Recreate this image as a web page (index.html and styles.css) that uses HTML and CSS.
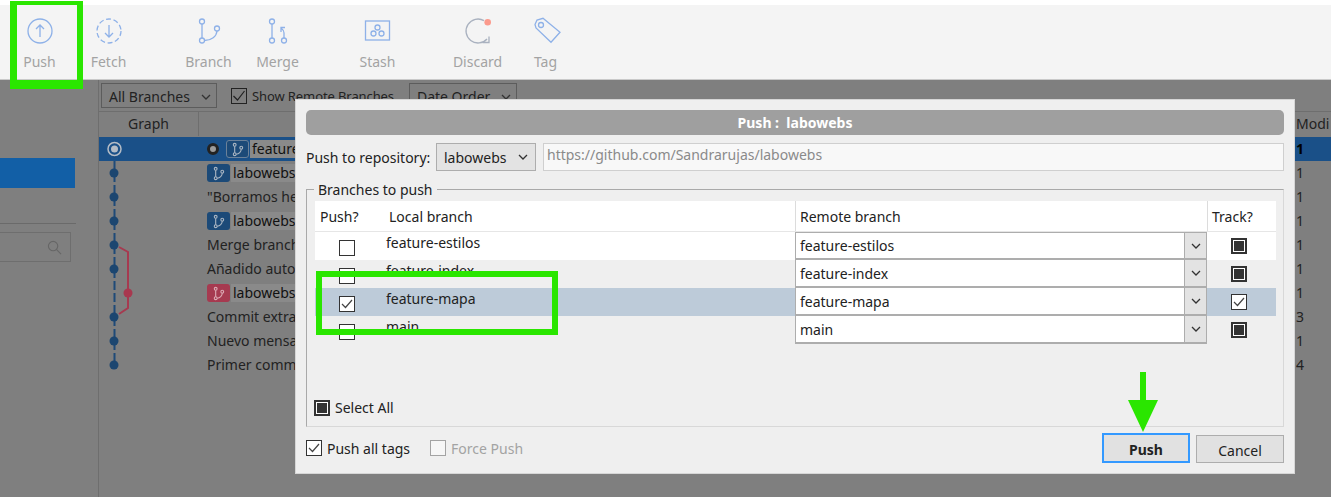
FILE: index.html
```html
<!DOCTYPE html>
<html lang="es">
<head>
  <meta charset="UTF-8">
  <title>Push : labowebs</title>
  <link rel="stylesheet" href="styles.css">
</head>
<body>
  <header class="toolbar">
    <div class="tool">
      <svg class="icon" viewBox="0 0 30 30"><circle cx="15" cy="15" r="12"/><path d="M15 21V9M11 13l4-4 4 4"/></svg>
      <span>Push</span>
    </div>
    <div class="tool">
      <svg class="icon" viewBox="0 0 30 30"><circle cx="15" cy="15" r="12" stroke-dasharray="5 2.6"/><path d="M15 9v12M11 17l4 4 4-4"/></svg>
      <span>Fetch</span>
    </div>
    <div class="tool tool-first">
      <svg class="icon" viewBox="0 0 30 30"><circle cx="8" cy="5.5" r="2.5"/><circle cx="8" cy="24.5" r="2.5"/><circle cx="23" cy="12.5" r="2.5"/><path d="M8 8v14M10.5 24.5c7 0 12-4 12.500-9.500"/></svg>
      <span>Branch</span>
    </div>
    <div class="tool">
      <svg class="icon" viewBox="0 0 30 30"><circle cx="9" cy="5.500" r="2.500"/><circle cx="9" cy="24.500" r="2.500"/><circle cx="21" cy="24.500" r="2.500"/><path d="M9 8v14M21 22v-5c0-2-1-3.500-3-5M18 16v-4.500h4"/></svg>
      <span>Merge</span>
    </div>
    <div class="tool tool-first">
      <svg class="icon" viewBox="0 0 30 30"><rect x="2.500" y="5" width="24" height="19"/><circle cx="14.500" cy="11.500" r="2.500"/><circle cx="10.500" cy="17.500" r="2.500"/><circle cx="18.500" cy="17.500" r="2.500"/></svg>
      <span>Stash</span>
    </div>
    <div class="tool tool-first">
      <svg class="icon" viewBox="0 0 30 30"><path class="gray" d="M21 4.600A12 12 0 1 0 24 23"/><path class="gray" d="M26 20.500v6h-6.500"/><circle class="red" cx="24.700" cy="6.300" r="3.300"/></svg>
      <span>Discard</span>
    </div>
    <div class="tool tool-tag">
      <svg class="icon" viewBox="0 0 30 30"><path d="M4 8.500l2-4.500 6-1.700L29 16.300 20 26.300 5 12z"/><circle cx="10" cy="9" r="2.500"/></svg>
      <span>Tag</span>
    </div>
  </header>

  <div class="workspace">
    <aside class="sidebar">
      <div class="side-item"></div>
      <div class="side-rule"></div>
      <div class="side-search">
        <svg class="search-icon" viewBox="0 0 16 16"><circle cx="6.500" cy="6.500" r="5"/><path d="M10 10l5 5"/></svg>
      </div>
    </aside>

    <main class="history">
      <div class="filters">
        <div class="drop drop-branches">All Branches <svg class="chev" viewBox="0 0 10 6"><path d="M1 1l4 4 4-4"/></svg></div>
        <label class="show-remote"><span class="box-dim"><svg viewBox="0 0 16 16"><path d="M2.500 8l4 4 7-9"/></svg></span>Show Remote Branches</label>
        <div class="drop drop-order">Date Order <svg class="chev" viewBox="0 0 10 6"><path d="M1 1l4 4 4-4"/></svg></div>
      </div>
      <div class="columns">
        <div class="col-graph">Graph</div>
        <div class="col-desc"></div>
        <div class="col-mod">Modi</div>
      </div>
      <div class="commits">
        <svg class="graph" viewBox="0 0 99 240" width="99" height="240">
          <path class="line-blue" d="M15.500 12V228" stroke-dasharray="9 3"/>
          <path class="line-red" d="M20 110l9 5V171l-9 6"/>
          <circle class="ring" cx="15.500" cy="12" r="6.500"/>
          <circle class="ring-core" cx="15.500" cy="12" r="3.500"/>
          <circle class="dot" cx="15" cy="36" r="4.500"/>
          <circle class="dot" cx="15" cy="60" r="4.500"/>
          <circle class="dot" cx="15" cy="84" r="4.500"/>
          <circle class="dot" cx="15" cy="108" r="4.500"/>
          <circle class="dot" cx="15" cy="132" r="4.500"/>
          <circle class="dot-red" cx="29" cy="156" r="4.500"/>
          <circle class="dot" cx="15" cy="180" r="4.500"/>
          <circle class="dot" cx="15" cy="204" r="4.500"/>
          <circle class="dot" cx="15" cy="228" r="4.500"/>
        </svg>
        <div class="commit commit-selected">
          <div class="commit-text"><span class="head-dot"></span><span class="badge badge-head"><svg viewBox="0 0 16 16"><use href="#branch-glyph"/></svg></span><span class="ref">feature</span></div>
          <div class="commit-num">1</div>
        </div>
        <div class="commit">
          <div class="commit-text"><span class="badge"><svg viewBox="0 0 16 16"><use href="#branch-glyph"/></svg></span><span class="ref">labowebs/</span></div>
          <div class="commit-num">1</div>
        </div>
        <div class="commit">
          <div class="commit-text">"Borramos he</div>
          <div class="commit-num">1</div>
        </div>
        <div class="commit">
          <div class="commit-text"><span class="badge"><svg viewBox="0 0 16 16"><use href="#branch-glyph"/></svg></span><span class="ref">labowebs/</span></div>
          <div class="commit-num">1</div>
        </div>
        <div class="commit">
          <div class="commit-text">Merge branch</div>
          <div class="commit-num">1</div>
        </div>
        <div class="commit">
          <div class="commit-text">Añadido auto</div>
          <div class="commit-num">1</div>
        </div>
        <div class="commit">
          <div class="commit-text"><span class="badge badge-red"><svg viewBox="0 0 16 16"><use href="#branch-glyph"/></svg></span><span class="ref">labowebs/</span></div>
          <div class="commit-num">1</div>
        </div>
        <div class="commit">
          <div class="commit-text">Commit extra</div>
          <div class="commit-num">3</div>
        </div>
        <div class="commit">
          <div class="commit-text">Nuevo mensa</div>
          <div class="commit-num">1</div>
        </div>
        <div class="commit">
          <div class="commit-text">Primer comm</div>
          <div class="commit-num">4</div>
        </div>
      </div>
    </main>
  </div>

  <svg class="defs" width="0" height="0">
    <symbol id="branch-glyph" viewBox="0 0 16 16">
      <g fill="none" stroke="currentColor" stroke-width="1.200">
        <circle cx="5" cy="3" r="1.500"/><circle cx="5" cy="13" r="1.500"/><circle cx="12" cy="6" r="1.500"/>
        <path d="M5 4.500v7M6.500 13c3 0 5.500-2.500 5.500-5.500"/>
      </g>
    </symbol>
  </svg>

  <section class="dialog">
    <h2 class="dialog-title">Push :&nbsp; labowebs</h2>
    <div class="repo-row">
      <span class="repo-label">Push to repository:</span>
      <div class="combo-repo">labowebs <svg class="chev" viewBox="0 0 10 6"><path d="M1 1l4 4 4-4"/></svg></div>
      <div class="repo-url">https://github.com/Sandrarujas/labowebs</div>
    </div>

    <div class="group">
      <span class="group-legend">Branches to push</span>
      <div class="branch-table">
        <div class="branch-row branch-head">
          <div class="cell-local"><span class="head-push">Push?</span><span>Local branch</span></div>
          <div class="cell-remote-head">Remote branch</div>
          <div class="cell-track-head">Track?</div>
        </div>
        <div class="branch-row row-white">
          <div class="cell-local"><span class="check"></span><span class="local-name">feature-estilos</span></div>
          <div class="remote"><span class="remote-value">feature-estilos</span><span class="remote-btn"><svg class="chev" viewBox="0 0 10 6"><path d="M1 1l4 4 4-4"/></svg></span></div>
          <div class="cell-track"><span class="check check-mixed"></span></div>
        </div>
        <div class="branch-row">
          <div class="cell-local"><span class="check"></span><span class="local-name">feature-index</span></div>
          <div class="remote"><span class="remote-value">feature-index</span><span class="remote-btn"><svg class="chev" viewBox="0 0 10 6"><path d="M1 1l4 4 4-4"/></svg></span></div>
          <div class="cell-track"><span class="check check-mixed"></span></div>
        </div>
        <div class="branch-row row-selected">
          <div class="cell-local"><span class="check"><svg viewBox="0 0 14 14"><path d="M2 7l3.500 3.500L12 3"/></svg></span><span class="local-name">feature-mapa</span></div>
          <div class="remote"><span class="remote-value">feature-mapa</span><span class="remote-btn"><svg class="chev" viewBox="0 0 10 6"><path d="M1 1l4 4 4-4"/></svg></span></div>
          <div class="cell-track"><span class="check"><svg viewBox="0 0 14 14"><path d="M2 7l3.500 3.500L12 3"/></svg></span></div>
        </div>
        <div class="branch-row">
          <div class="cell-local"><span class="check"></span><span class="local-name">main</span></div>
          <div class="remote"><span class="remote-value">main</span><span class="remote-btn"><svg class="chev" viewBox="0 0 10 6"><path d="M1 1l4 4 4-4"/></svg></span></div>
          <div class="cell-track"><span class="check check-mixed"></span></div>
        </div>
      </div>
      <label class="select-all"><span class="check check-mixed"></span>Select All</label>
    </div>

    <div class="dialog-foot">
      <label class="opt"><span class="check"><svg viewBox="0 0 14 14"><path d="M2 7l3.500 3.500L12 3"/></svg></span>Push all tags</label>
      <label class="opt opt-off"><span class="check"></span>Force Push</label>
      <button class="btn btn-default">Push</button>
      <button class="btn btn-cancel">Cancel</button>
    </div>
  </section>

  <div class="mark mark-push"></div>
  <div class="mark mark-branch"></div>
  <svg class="mark-arrow" viewBox="0 0 32 60" width="32" height="60"><path d="M13 0h6v28h12L16 60 1 28h12z"/></svg>
</body>
</html>
```

FILE: styles.css
```css
* {
  box-sizing: border-box;
}
html, body {
  margin: 0;
  height: 497px;
  overflow: hidden;
}
body {
  position: relative;
  font-family: "Noto Sans", "Open Sans", sans-serif;
  font-size: 14px;
  color: #222;
  background: #7f7f7f;
}

/* toolbar */
.toolbar {
  display: flex;
  height: 80px;
  padding-left: 5px;
  background: #f4f4f4;
  border-top: 5px solid #fff;
  border-bottom: 1px solid #c9c9c9;
}
.tool {
  display: flex;
  flex-direction: column;
  align-items: center;
  width: 69px;
  padding-top: 11px;
  color: #a3a3a3;
}
.tool span {
  margin-top: 6px;
}
.tool-first {
  margin-left: 31px;
}
.tool-tag {
  margin-left: -1px;
}
.icon {
  width: 30px;
  height: 30px;
  fill: none;
  stroke: #8eb1e8;
  stroke-width: 1.300;
}
.icon .gray {
  stroke: #a9b1bf;
}
.icon .red {
  fill: #fb9a8c;
  stroke: none;
}

/* window behind the dialog */
.workspace {
  display: flex;
  height: 417px;
}
.sidebar {
  width: 99px;
  padding: 78px 23px 0 0;
  border-right: 1px solid #6e6e6e;
}
.side-item {
  width: 75px;
  height: 30px;
  background: #125fa6;
}
.side-rule {
  width: 76px;
  height: 1px;
  margin-top: 35px;
  background: #6a6a6a;
}
.side-search {
  display: flex;
  align-items: center;
  justify-content: flex-end;
  width: 71px;
  height: 30px;
  margin-top: 8px;
  padding-right: 8px;
  border: 1px solid #6e6e6e;
  border-left: 0;
}
.search-icon {
  width: 15px;
  height: 15px;
  fill: none;
  stroke: #666;
  stroke-width: 1.200;
}
.history {
  flex: 1;
  min-width: 0;
}
.filters {
  display: flex;
  align-items: center;
  height: 31px;
  padding-left: 2px;
  color: #222;
}
.drop {
  display: flex;
  align-items: center;
  justify-content: space-between;
  height: 25px;
  padding: 2px 5px 0 7px;
  border: 1px solid #5c5c5c;
}
.drop-branches {
  width: 116px;
}
.drop-order {
  width: 108px;
  margin-left: 15px;
}
.chev {
  width: 10px;
  height: 6px;
  flex: none;
  fill: none;
  stroke: #333;
  stroke-width: 1.300;
}
.show-remote {
  display: flex;
  align-items: center;
  gap: 5px;
  margin-left: 14px;
  font-size: 13px;
  letter-spacing: -0.1px;
}
.box-dim {
  width: 16px;
  height: 16px;
  border: 1px solid #222;
}
.box-dim svg {
  display: block;
  fill: none;
  stroke: #222;
  stroke-width: 1.200;
  margin: -1px;
}
.columns {
  display: grid;
  grid-template-columns: 100px 1fr 35px;
  height: 25px;
  line-height: 24px;
  border-top: 1px solid #6e6e6e;
}
.col-graph {
  text-align: center;
  border-right: 1px solid #6e6e6e;
}
.commits {
  position: relative;
  padding-top: 1px;
}
.graph {
  position: absolute;
  left: 0;
  top: 1px;
  fill: none;
}
.line-blue {
  stroke: #1f4a78;
  stroke-width: 2;
}
.line-red {
  stroke: #a63a50;
  stroke-width: 2;
}
.ring {
  fill: #1a5088;
  stroke: #b4bcc6;
  stroke-width: 1.500;
}
.ring-core {
  fill: #b4bcc6;
}
.dot {
  fill: #1c4670;
}
.dot-red {
  fill: #a8384f;
}
.commit {
  display: grid;
  grid-template-columns: 1fr 35px;
  height: 24px;
  line-height: 24px;
  padding-left: 108px;
}
.commit-selected {
  background: #1a5088;
}
.commit-text {
  display: flex;
  align-items: center;
  white-space: nowrap;
}
.commit-num {
  overflow: hidden;
}
.commit-selected .commit-num {
  color: #000;
  font-weight: 700;
}
.head-dot {
  width: 12px;
  height: 12px;
  margin-right: 7px;
  border: 3px solid #222;
  border-radius: 50%;
  background: #9c9c9c;
}
.badge {
  display: flex;
  align-items: center;
  justify-content: center;
  width: 23px;
  height: 18px;
  border-radius: 3px;
  background: #1c4a78;
  color: #a9b5c2;
}
.badge svg {
  width: 15px;
  height: 15px;
}
.badge-head {
  border: 1px solid #6b8199;
}
.badge-red {
  background: #a63a50;
  color: #dcaab4;
}
.ref {
  height: 18px;
  line-height: 18px;
  margin-left: 1px;
  padding-left: 2px;
  background: #8a8a8a;
  color: #111;
}
.defs {
  position: absolute;
}

/* push dialog */
.dialog {
  position: absolute;
  left: 295px;
  top: 99px;
  display: flex;
  flex-direction: column;
  width: 1000px;
  height: 375px;
  padding: 10px 10px 0;
  background: #efefef;
  border: 1px solid #d6d6d6;
}
.dialog-title {
  height: 25px;
  margin: 0;
  border-radius: 5px;
  background: #9f9f9f;
  color: #fff;
  font-size: 14px;
  font-weight: 700;
  line-height: 25px;
  text-align: center;
}
.repo-row {
  display: flex;
  align-items: center;
  height: 28px;
  margin-top: 8px;
}
.repo-label {
  width: 130px;
}
.combo-repo {
  display: flex;
  align-items: center;
  justify-content: space-between;
  width: 100px;
  height: 28px;
  padding: 0 7px;
  background: #e3e3e3;
  border: 1px solid #adadad;
}
.repo-url {
  flex: 1;
  height: 28px;
  margin-left: 7px;
  padding-left: 3px;
  line-height: 22px;
  color: #8a8a8a;
  background: #f8f8f8;
  border: 1px solid #cfcfcf;
}
.group {
  position: relative;
  display: flex;
  flex-direction: column;
  height: 238px;
  margin-top: 18px;
  padding: 11px 7px 9px 8px;
  border: 1px solid #d8d8d8;
  border-top-color: #a9a9a9;
  border-left-color: #a9a9a9;
}
.group-legend {
  position: absolute;
  left: 7px;
  top: -10px;
  padding: 0 4px;
  background: #efefef;
}
.branch-row {
  display: grid;
  grid-template-columns: 480px 412px 69px;
  height: 28px;
}
.branch-head {
  height: 31px;
  background: #fff;
  border-bottom: 1px solid #e6e6e6;
}
.branch-head > div {
  display: flex;
  align-items: center;
}
.cell-local {
  display: flex;
  align-items: center;
}
.head-push {
  width: 74px;
  padding-left: 5px;
}
.cell-remote-head,
.cell-track-head {
  padding-left: 4px;
  border-left: 1px solid #dcdcdc;
}
.row-white {
  background: #fff;
}
.row-selected {
  background: #bdcbd9;
}
.check {
  display: flex;
  align-items: center;
  justify-content: center;
  flex: none;
  width: 16px;
  height: 16px;
  background: #fff;
  border: 1px solid #333;
}
.check svg {
  width: 14px;
  height: 14px;
  fill: none;
  stroke: #444;
  stroke-width: 1.200;
}
.check-mixed {
  border-width: 2px;
}
.check-mixed::before {
  content: "";
  width: 10px;
  height: 10px;
  background: #333;
}
.cell-local .check {
  margin: 4px 31px 0 24px;
}
.local-name {
  margin-bottom: 8px;
}
.remote {
  display: flex;
  height: 28px;
  background: #fff;
  border: 1px solid #adadad;
  border-top-width: 0;
  border-bottom-width: 2px;
}
.row-white .remote {
  border-top-width: 1px;
}
.remote-value {
  flex: 1;
  padding-left: 4px;
  line-height: 28px;
}
.row-white .remote-value {
  line-height: 26px;
}
.remote-btn {
  display: flex;
  align-items: center;
  justify-content: center;
  width: 22px;
  background: #e3e3e3;
  border-left: 1px solid #adadad;
}
.cell-track {
  display: flex;
  align-items: center;
  justify-content: center;
  padding-right: 5px;
}
.select-all {
  display: flex;
  align-items: center;
  gap: 5px;
  margin-top: auto;
  margin-left: -1px;
}
.dialog-foot {
  display: flex;
  align-items: center;
  height: 30px;
  margin-top: 6px;
}
.opt {
  display: flex;
  align-items: center;
  gap: 5px;
  margin-right: 20px;
}
.opt-off {
  color: #a3a3a3;
}
.opt-off .check {
  background: #f6f6f6;
  border-color: #a3a3a3;
}
.btn {
  width: 88px;
  padding: 2px 0 0;
  font: inherit;
  color: #222;
  background: #e1e1e1;
}
.btn-default {
  height: 30px;
  margin-left: auto;
  font-weight: 700;
  border: 2px solid #3399ff;
}
.btn-cancel {
  height: 28px;
  margin: 2px 0 0 6px;
  border: 1px solid #adadad;
}

/* green marks drawn over the screenshot */
.mark {
  position: absolute;
  border: 6px solid #2ae600;
}
.mark-push {
  left: 10px;
  top: 1px;
  width: 73px;
  height: 88px;
  border-width: 4px 6px 9px 7px;
}
.mark-branch {
  left: 316px;
  top: 271px;
  width: 242px;
  height: 64px;
}
.mark-arrow {
  position: absolute;
  left: 1127px;
  top: 372px;
  fill: #2ae600;
}
```
